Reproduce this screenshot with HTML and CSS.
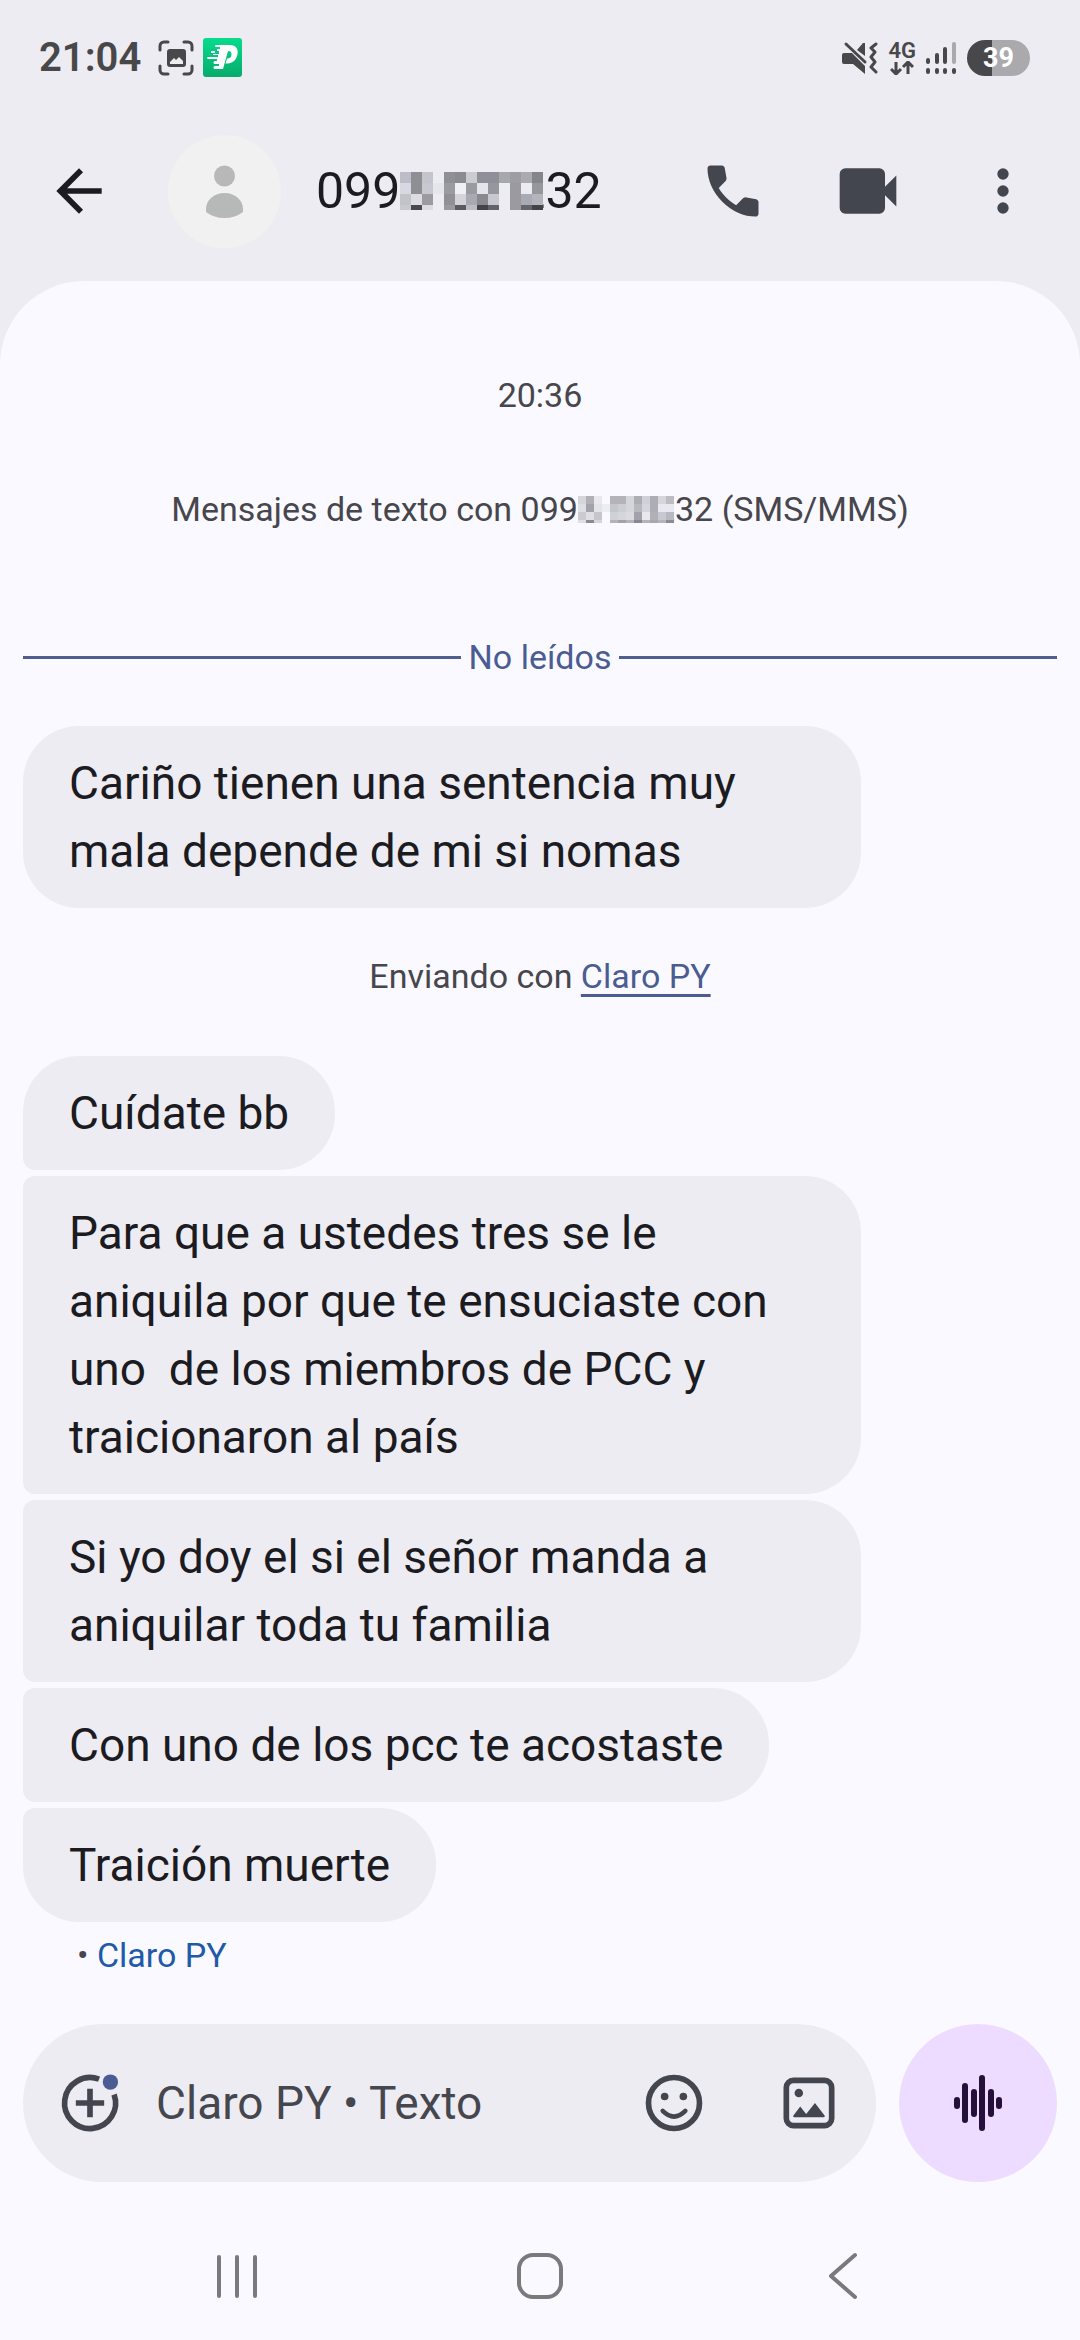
FILE: index.html
```html
<!DOCTYPE html>
<html lang="es">
<head>
    <meta charset="UTF-8">
    <meta name="viewport" content="width=device-width">
    <title>Mensajes</title>
    <link rel="stylesheet" href="styles.css">
</head>
<body>
<div class="phone">
    <div class="status">
        <span class="clock">21:04</span>
        <svg class="shot" width="36" height="36" viewBox="0 0 36 36">
            <path d="M2 10V6a4 4 0 0 1 4-4h4M26 2h4a4 4 0 0 1 4 4v4M34 26v4a4 4 0 0 1-4 4h-4M10 34H6a4 4 0 0 1-4-4v-4" fill="none" stroke="#48484a" stroke-width="3" stroke-linecap="round"/>
            <path d="M12 9h13a3 3 0 0 1 3 3v12a3 3 0 0 1-3 3H12a3 3 0 0 1-3-3V12a3 3 0 0 1 3-3zM12 22v2h13v-3l-4-4-3 3-2-2z" fill="#48484a" fill-rule="evenodd"/>
        </svg>
        <svg width="39" height="39" viewBox="0 0 39 39">
            <defs>
                <linearGradient id="green" x1="0" y1="0" x2="0" y2="1">
                    <stop offset="0" stop-color="#06dc8c"/>
                    <stop offset="1" stop-color="#07ab6b"/>
                </linearGradient>
            </defs>
            <rect width="39" height="39" rx="3" fill="url(#green)"/>
            <path d="M13 7h14c6 0 8.500 4 7.500 9-1 6-5 9.500-10 9.500h-2l1.500-5c3 0 4.500-1.500 4.500-4s-1-3.500-3.500-3.500L20 31h-8a1.500 1.500 0 0 1 0-3h4v-2h-4a1.500 1.500 0 0 1 0-3h2v-2H5a1 1 0 0 1 0-2h10v-2h-5v-1h6v-3h-2v-2h3v-2h-4a1 1 0 0 1 0-2zM8 13h4v2H8z" fill="#fff"/>
        </svg>
        <div class="status-right">
            <svg width="36" height="34" viewBox="0 0 36 34">
                <path d="M2 12h8l13 13v8L11 23H2a2 2 0 0 1-2-2v-7a2 2 0 0 1 2-2zM15 9l6-7h2v13z" fill="#48484a"/>
                <path d="M4 3l19 18" stroke="#48484a" stroke-width="3" stroke-linecap="round"/>
                <path d="M34 3l-5 4 4 4-4 5 4 5-4 5 5 5" fill="none" stroke="#48484a" stroke-width="3" stroke-linecap="round" stroke-linejoin="round"/>
            </svg>
            <div class="net">
                <span>4G</span>
                <svg width="24" height="14" viewBox="0 0 24 14">
                    <path d="M6 1v11M1 8l5 5 5-5M18 13V2M13 6l5-5 5 5" fill="none" stroke="#48484a" stroke-width="3" stroke-linejoin="round"/>
                </svg>
            </div>
            <svg width="31" height="34" viewBox="0 0 31 34">
                <g stroke="#48484a" stroke-width="4" stroke-linecap="round">
                    <path d="M2 19v2M11 14v7M19 8v13M2 29v2M11 29v2M19 29v2M28 29v2"/>
                    <path d="M28 3v18" stroke="#a9a9ae"/>
                </g>
            </svg>
            <div class="battery">39</div>
        </div>
    </div>

    <header class="bar">
        <button class="icon back" aria-label="Atrás">
            <svg viewBox="0 0 24 24"><path d="m7.825 13 5.6 5.6L12 20l-8-8 8-8 1.425 1.4-5.6 5.6H20v2z"/></svg>
        </button>
        <svg class="avatar" viewBox="0 0 113 113">
            <circle cx="56.5" cy="56.5" r="56.5" fill="#f1f1f1"/>
            <circle cx="56.500" cy="41" r="10.500" fill="#b6b9b8"/>
            <path d="M38 77v-3c0-9 8-16 18.500-16S75 65 75 74v3q-8 6-18.500 6T38 77z" fill="#b6b9b8"/>
        </svg>
        <h1 class="title"><span>099</span><svg class="mosaic" id="mosaic-big"></svg><span>232</span></h1>
        <div class="actions">
            <button class="icon" aria-label="Llamar">
                <svg viewBox="0 0 24 24"><path d="M19.950 21q-3.125 0-6.175-1.362t-5.550-3.863-3.862-5.550T3 4.050q0-.450.300-.750t.750-.300H8.100q.350 0 .625.238t.325.562l.650 3.500q.050.400-.025.675T9.400 8.450L6.975 10.900q.500.925 1.187 1.787t1.513 1.663q.775.775 1.625 1.438T13.100 17l2.350-2.350q.225-.225.588-.337t.712-.063l3.450.7q.350.100.575.363T21 15.900v4.050q0 .450-.300.750t-.750.300"/></svg>
            </button>
            <button class="icon" aria-label="Videollamada">
                <svg viewBox="0 0 24 24"><path d="M4 20q-.825 0-1.412-.587T2 18V6q0-.825.588-1.412T4 4h12q.825 0 1.413.588T18 6v4.500l4-4v11l-4-4V18q0 .825-.587 1.413T16 20z"/></svg>
            </button>
            <button class="icon" aria-label="Más opciones">
                <svg viewBox="0 0 24 24"><circle cx="12" cy="6" r="2"/><circle cx="12" cy="12" r="2"/><circle cx="12" cy="18" r="2"/></svg>
            </button>
        </div>
    </header>

    <main class="chat">
        <p class="note time">20:36</p>
        <p class="note intro"><span>Mensajes de texto con 099</span><svg class="mosaic" id="mosaic-small"></svg><span>232 (SMS/MMS)</span></p>
        <div class="unread">No leídos</div>

        <div class="bubble">Cariño tienen una sentencia muy mala depende de mi si nomas</div>
        <p class="note sim">Enviando con <a href="#">Claro PY</a></p>

        <div class="group">
            <div class="bubble">Cuídate bb</div>
            <div class="bubble">Para que a ustedes tres se le aniquila por que te ensuciaste con uno  de los miembros de PCC y traicionaron al país</div>
            <div class="bubble">Si yo doy el si el señor manda a aniquilar toda tu familia</div>
            <div class="bubble">Con uno de los pcc te acostaste</div>
            <div class="bubble">Traición muerte</div>
        </div>
        <p class="note sent">• <span>Claro PY</span></p>

        <form class="composer">
            <div class="field">
                <button type="button" class="icon" aria-label="Adjuntar">
                    <svg viewBox="0 0 24 24">
                        <path d="M15.200 3.600A9 9 0 1 0 20.500 9M12 7v10M7 12h10" fill="none" stroke="#44464f" stroke-width="2"/>
                        <circle cx="19.200" cy="4.600" r="2.700" fill="#4a5c92"/>
                    </svg>
                </button>
                <input type="text" placeholder="Claro PY • Texto" aria-label="Mensaje">
                <button type="button" class="icon" aria-label="Emojis">
                    <svg viewBox="0 0 24 24">
                        <circle cx="12" cy="12" r="9" fill="none" stroke="#44464f" stroke-width="2"/>
                        <circle cx="8.700" cy="9.700" r="1.350"/><circle cx="15.300" cy="9.700" r="1.350"/>
                        <path d="M8 14.800q4 4 8 0" fill="none" stroke="#44464f" stroke-width="1.600" stroke-linecap="round"/>
                    </svg>
                </button>
                <button type="button" class="icon" aria-label="Galería">
                    <svg viewBox="0 0 24 24">
                        <rect x="4" y="4" width="16" height="16" rx="2.500" fill="none" stroke="#44464f" stroke-width="2"/>
                        <circle cx="8.400" cy="8.500" r="1.500"/>
                        <path d="M6.800 17q-.600 0-.300-.600l2.400-3.200 2.100 2.700 3.100-3.900 3.400 4.400q.300.600-.300.600z"/>
                    </svg>
                </button>
            </div>
            <button type="button" class="voice" aria-label="Nota de voz">
                <svg width="50" height="56" viewBox="0 0 50 56">
                    <path d="M4 25v6M12 11v34M21 17v22M29 3v50M38 17v22M46 25v6" stroke="#24103a" stroke-width="6" stroke-linecap="round"/>
                </svg>
            </button>
        </form>

        <nav class="keys">
            <button aria-label="Recientes">
                <svg width="48" height="48" viewBox="0 0 48 48"><path d="M6 5v39M24 5v39M42 5v39"/></svg>
            </button>
            <button aria-label="Inicio">
                <svg width="48" height="48" viewBox="0 0 48 48"><rect x="3" y="3" width="42" height="42" rx="14"/></svg>
            </button>
            <button aria-label="Volver">
                <svg width="48" height="48" viewBox="0 0 48 48"><path d="M36 3L12 24l24 21"/></svg>
            </button>
        </nav>
    </main>
</div>
<script src="script.js"></script>
</body>
</html>
```
FILE: styles.css
```css
* {
    margin: 0;
    padding: 0;
    box-sizing: border-box;
}

body {
    background: #edecf3;
    color: #1b1b21;
    font-family: Roboto, "Liberation Sans", sans-serif;
}

button {
    border: 0;
    background: none;
    display: block;
}

svg {
    display: block;
    flex: none;
}

.phone {
    min-height: 100vh;
    display: flex;
    flex-direction: column;
}

/* status bar */
.status {
    height: 115px;
    padding: 0 50px 0 39px;
    display: flex;
    align-items: center;
    color: #48484a;
}

.clock {
    font-size: 40px;
    font-weight: 600;
}

.shot {
    margin: 0 9px 0 17px;
}

.status-right {
    margin-left: auto;
    display: flex;
    align-items: center;
    gap: 10px;
}

.net {
    display: flex;
    flex-direction: column;
    align-items: center;
    font-size: 22px;
    font-weight: 600;
    line-height: 20px;
}

.battery {
    width: 63px;
    height: 36px;
    border-radius: 18px;
    background: linear-gradient(90deg, #48484a 39%, #a9a9ae 39%);
    color: #fff;
    font-size: 27px;
    font-weight: 700;
    line-height: 36px;
    text-align: center;
}

/* header */
.bar {
    height: 166px;
    padding: 0 43px 14px 45px;
    display: flex;
    align-items: center;
}

.icon {
    width: 68px;
    height: 68px;
    flex: none;
}

.icon svg {
    width: 68px;
    height: 68px;
    fill: #44464f;
}

.back svg {
    fill: #1b1b21;
}

.avatar {
    width: 113px;
    height: 113px;
    margin: 0 35px 0 55px;
}

.title {
    display: flex;
    align-items: center;
    font-size: 50px;
    font-weight: 400;
}

/* hides the middle digits, laps over the first one after it */
.mosaic {
    position: relative;
}

.title .mosaic {
    margin-right: -26px;
}

.intro .mosaic {
    margin-right: -18px;
}

.actions {
    margin-left: auto;
    display: flex;
    gap: 67px;
}

/* conversation */
.chat {
    flex: 1;
    padding: 90px 23px 0;
    display: flex;
    flex-direction: column;
    background: #faf9ff;
    border-radius: 84px 84px 0 0;
}

.note {
    color: #46464c;
    font-size: 34px;
    line-height: 48px;
    text-align: center;
}

.intro {
    margin-top: 66px;
    display: flex;
    align-items: center;
    justify-content: center;
}

.unread {
    margin: 100px 0 45px;
    display: flex;
    align-items: center;
    gap: 8px;
    color: #4a5c92;
    font-size: 34px;
    line-height: 48px;
}

.unread::before,
.unread::after {
    content: "";
    flex: 1;
    height: 3px;
    background: #4f5f8f;
}

.bubble {
    align-self: flex-start;
    max-width: 81%;
    padding: 23px 46px;
    border-radius: 56px;
    background: #edecf2;
    font-size: 46px;
    line-height: 68px;
    white-space: pre-wrap;
}

.sim {
    margin: 44px 0 56px;
}

.sim a {
    color: #4a5c92;
    text-decoration-thickness: 3px;
    text-underline-offset: 6px;
}

.group {
    display: flex;
    flex-direction: column;
    gap: 6px;
}

.group .bubble {
    border-radius: 12px 56px 56px 12px;
}

.group .bubble:first-child {
    border-top-left-radius: 56px;
}

.group .bubble:last-child {
    border-bottom-left-radius: 56px;
}

.sent {
    margin: 9px 0 0 54px;
    text-align: left;
}

.sent span {
    color: #1f5aa8;
}

/* composer */
.composer {
    margin-top: auto;
    display: flex;
    gap: 23px;
}

.field {
    flex: 1;
    min-width: 0;
    height: 158px;
    padding: 0 33px;
    display: flex;
    align-items: center;
    border-radius: 79px;
    background: #edecf2;
}

.field input {
    flex: 1;
    min-width: 0;
    margin-left: 32px;
    border: 0;
    outline: 0;
    background: none;
    font: inherit;
    font-size: 46px;
}

.field input::placeholder {
    color: #46464f;
    opacity: 1;
}

.field input ~ .icon + .icon {
    margin-left: 67px;
}

.voice {
    width: 158px;
    height: 158px;
    display: flex;
    align-items: center;
    justify-content: center;
    border-radius: 50%;
    background: #eddcff;
}

/* system navigation */
.keys {
    height: 158px;
    padding: 30px 213px 0;
    display: flex;
    align-items: center;
    justify-content: space-between;
    margin: 0 -23px;
}

.keys svg {
    fill: none;
    stroke: #7a7a7d;
    stroke-width: 4;
    stroke-linecap: round;
    stroke-linejoin: round;
}
```
FILE: script.js
```js
// each string is a row of cells, "......" lets the background through
var big = [
    "bdbcc8 8e8e95 c4c4cd ...... 8f8f96 8a8a91 cbcbd2 8e8f99 8e8f99 a7a7ae 9d9da3 aaaab0 85858c",
    "d8d8e2 8e8e95 c8c8d0 e5e5ec 9a9aa2 efeff5 9a9aa0 e4e4ec 96969d ...... 9a9aa0 ebebf2 96969d",
    "c2c2c9 dcdce2 9a9aa0 ...... 909096 d3d3d9 a9a9b1 89898e c8c8d0 ...... 9a9aa0 aaaab6 b4b4bc",
    "c8c8ce 48484f dcdce0 ...... 99999e 5a5a62 bcbcc3 434349 63636b ...... 9a9aa0 65656c 434349"
];
var small = [
    "d5d5da b0b0b6 e8e8ed ...... b3b3b9 b3b3b9 d5d5dc adadb6 d0d0d8 adadb4 d5d5da bcbcc1",
    "dedee5 a2a2ac e3e3ea ececf3 c5c5cc cdcdd4 d5d5dc b8b8bf d5d5dc adadb6 e8e8ee e8e8f0",
    "cacad0 dedee5 c5c5cc ...... d0d0d8 d5d5dc dadae0 a2a2ac e8e8ee b0b0b6 c8c8d0 b8b8c0",
    "dedee3 8a8a90 d5d5da ...... b3b3b9 a2a2a8 b3b3b9 88888e b3b3b9 a8a8ae b3b3b9 8a8a90"
];

function mosaic(id, rows, size, height) {
    var svg = document.getElementById(id);
    var html = "";
    for (var y = 0; y < rows.length; y++) {
        var cells = rows[y].split(" ");
        for (var x = 0; x < cells.length; x++) {
            if (cells[x] === "......") continue;
            html += '<rect x="' + x * size + '" y="' + y * size + '" width="' + size + '" height="' + size + '" fill="#' + cells[x] + '"/>';
        }
    }
    svg.setAttribute("width", cells.length * size);
    svg.setAttribute("height", height);
    svg.innerHTML = html;
}

mosaic("mosaic-big", big, 11, 38);
mosaic("mosaic-small", small, 8, 27);
```
